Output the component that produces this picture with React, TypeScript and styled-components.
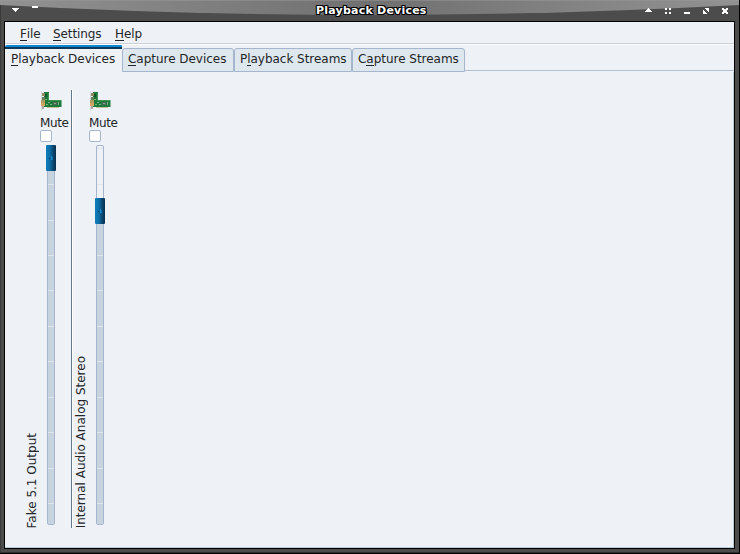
import React from "react";
import styled, { createGlobalStyle } from "styled-components";

const GlobalStyle = createGlobalStyle`
  * { box-sizing: border-box; }
  body { margin: 0; overflow: hidden; font-family: "DejaVu Sans", sans-serif; font-size: 12px; color: #232629; }
`;

const Window = styled.div`
  position: relative;
  width: 740px;
  height: 554px;
  display: flex;
  flex-direction: column;
  background: #4c4c4c;
  border-right: 1px solid #000;
  border-bottom: 1px solid #000;
  box-shadow: inset 1px 0 #3a3a3a, inset 0 -1px #303030;
`;

const TitleBar = styled.header`
  position: relative;
  height: 21px;
  flex: none;
`;

const TitleArt = styled.svg`
  position: absolute;
  left: 0;
  top: 0;
`;

const Title = styled.h1`
  position: absolute;
  left: 316px;
  top: 4px;
  margin: 0;
  font-size: 11px;
  line-height: 14px;
  font-weight: bold;
  letter-spacing: 0.22px;
  white-space: nowrap;
  color: #fff;
  text-shadow: -1px -1px #000, 1px -1px #000, -1px 1px #000, 1px 1px #000, 0 1px #000, 0 -1px #000, 1px 0 #000, -1px 0 #000;
`;

const Client = styled.main`
  width: 731px;
  height: 528px;
  margin-left: 4px;
  flex: none;
  display: flex;
  flex-direction: column;
  background: #eef1f6;
  border: 1px solid #000;
`;

const MenuBar = styled.nav`
  height: 23px;
  flex: none;
  display: flex;
  gap: 13px;
  padding: 4px 0 0 15px;
  line-height: 16px;
  border-bottom: 1px solid #fff;
  box-shadow: inset 0 -1px #c9d0d8;
`;

const Key = styled.span`
  border-bottom: 1px solid #232629;
  display: inline-block;
  height: 15px;
`;

const MenuItem = styled.span<{ $width: number }>`
  width: ${(p) => p.$width}px;
  white-space: nowrap;
  letter-spacing: -0.1px;
`;

const TabBar = styled.div`
  height: 27px;
  flex: none;
  display: flex;
  align-items: flex-start;
  background: linear-gradient(#b0bfd2, #b0bfd2) 0 25px / 100% 1px no-repeat;
`;

const Tab = styled.div<{ $width: number; $active?: boolean }>`
  width: ${(p) => p.$width}px;
  height: ${(p) => (p.$active ? 27 : 24)}px;
  margin-top: ${(p) => (p.$active ? 0 : 3)}px;
  padding: ${(p) => (p.$active ? "6px 0 0 6px" : "2px 0 0 5px")};
  line-height: 16px;
  letter-spacing: -0.03px;
  white-space: nowrap;
  background: ${(p) =>
    p.$active
      ? "linear-gradient(#0d87cd 0 2px, #0b3a5d 2px 4px, #eef1f6 4px)"
      : "#dfe7ee"};
  border: ${(p) => (p.$active ? "0" : "1px solid #a6b5ce")};
  border-radius: ${(p) => (p.$active ? "2px 1px 0 0" : "3px 3px 0 0")};
`;

const Pane = styled.section`
  flex: 1;
  display: flex;
  padding: 18px 0 0 21px;
  border-right: 1px solid #b9c9d6;
  border-bottom: 1px solid #b9c9d6;
`;

const Channel = styled.article`
  display: flex;
  width: 45px;
  height: 438px;
`;

const Divider = styled.div`
  width: 2px;
  height: 438px;
  margin-right: 2px;
  background: linear-gradient(90deg, #65788a 50%, #fff 50%);
`;

const NameColumn = styled.div`
  width: 14px;
  flex: none;
  display: flex;
  align-items: flex-end;
`;

const Name = styled.span`
  writing-mode: vertical-rl;
  transform: rotate(180deg);
  line-height: 14px;
  margin-left: -1px;
  white-space: nowrap;
`;

const Controls = styled.div`
  display: flex;
  flex-direction: column;
  width: 31px;
  flex: none;
`;

const CardIcon = styled.svg`
  display: block;
  width: 23px;
  height: 20px;
  flex: none;
  margin-top: 1px;
`;

const Mute = styled.label`
  display: flex;
  flex-direction: column;
  height: 34px;
  line-height: 16px;
  padding-top: 4px;
  letter-spacing: -0.35px;
`;

const CheckBox = styled.span`
  width: 12px;
  height: 12px;
  flex: none;
  margin-top: -1px;
  background: #fff;
  border: 1px solid #a6b5ce;
  border-radius: 2px;
`;

const Slider = styled.div`
  position: relative;
  width: 8px;
  height: 380px;
  margin: 0 0 3px 7px;
  border: 1px solid #a6b5ce;
  border-radius: 2px;
  background: #eef1f6;
`;

const Fill = styled.div<{ $top: number }>`
  position: absolute;
  inset: ${(p) => p.$top}px 0 0;
  background: #c8d3e0;
`;

const Tick = styled.div<{ $top: number }>`
  position: absolute;
  left: 0;
  right: 0;
  top: ${(p) => p.$top}px;
  height: 1px;
  background: #dfe6ed;
`;

const Thumb = styled.div<{ $top: number }>`
  position: absolute;
  left: -2px;
  top: ${(p) => p.$top}px;
  width: 10px;
  height: 26px;
  border-radius: 1px;
  background: linear-gradient(90deg, #0e7dbc, #0d70aa 35%, #0a3f66 80%, #092f4d);
  &::after {
    content: "";
    position: absolute;
    left: 5px;
    top: 11px;
    width: 2px;
    height: 4px;
    background: linear-gradient(90deg, #1689cc 50%, transparent 50%), linear-gradient(transparent 25%, #116fa9 25%);
  }
  &::before {
    content: "";
    position: absolute;
    left: 3px;
    top: 13px;
    width: 1px;
    height: 1px;
    background: #07345a;
  }
`;

const ticks = [2, 38, 74, 109, 144, 180, 215, 251, 286, 322, 357];

function SoundCard() {
  return (
    <CardIcon viewBox="0 0 23 20" aria-hidden="true">
      <path d="M1.5 0v20" stroke="#d3d8dd" />
      <path d="M3 1h6v8h12.5v7H4V1z" fill="#1c7a3a" />
      <path d="M8.5 2v7.5H21" fill="none" stroke="#3d9455" />
      <path d="M2 2h3v3H2z" fill="#8f8a62" />
      <path d="M2 6h3v3H2z" fill="#66805c" />
      <path d="M1 9h4v3H1z" fill="#b39a61" />
      <path d="M1 12h4v3H1z" fill="#d0a566" />
      <path d="M2 15h2v3H2z" fill="#aaa79e" />
      <path d="M5 3h2v3H5z" fill="#0a5427" />
      <path d="M13 11h4v3h-4z" fill="#4d6857" />
      <path d="M14 12h2v1h-2zM8 11h2v1H8zM10 13h2v1h-2zM18 11h1v3h-1z" fill="#87a78f" />
      <path d="M5 8h2v1H5zM6 13h2v1H6z" fill="#7bad6b" />
      <path d="M7 16.5h12" stroke="#bdb483" strokeOpacity=".8" />
    </CardIcon>
  );
}

function Mixer({ name, level }: { name: string; level: number }) {
  return (
    <Channel>
      <NameColumn><Name>{name}</Name></NameColumn>
      <Controls>
        <SoundCard />
        <Mute>Mute<CheckBox /></Mute>
        <Slider>
          <Fill $top={level + 13} />
          {ticks.map((t) => <Tick key={t} $top={t} />)}
          <Thumb $top={level} />
        </Slider>
      </Controls>
    </Channel>
  );
}

export default function App() {
  return (
    <>
      <GlobalStyle />
      <Window>
        <TitleBar>
          <TitleArt width="739" height="21" viewBox="0 0 739 21">
            <defs>
              <linearGradient id="gloss" x1="0" x2="1" y1="0" y2="0">
                <stop offset="0" stopColor="#929292" />
                <stop offset=".5" stopColor="#707070" />
                <stop offset="1" stopColor="#929292" />
              </linearGradient>
            </defs>
            <path d="M0 0h739v5Q370 25 0 5z" fill="url(#gloss)" />
            <path d="M0 .5h739" stroke="#9a9a9a" strokeOpacity=".5" />
            <g fill="#fff" shapeRendering="crispEdges">
              <path d="M12 8h7v1h-1v1h-1v1h-1v1h-1v-1h-1v-1h-1V9h-1z" />
              <path d="M32 6h6v2h-6z" />
              <path d="M645 12v-1h1v-1h1V9h1V8h1v1h1v1h1v1h1v1z" />
              <path d="M665 8h2v2h-2zM669 8h2v2h-2zM665 12h2v2h-2zM669 12h2v2h-2z" />
              <path d="M684 12h6v2h-6z" />
              <path d="M705 8h4v4h-1v-1h-1v-1h-1V9h-1zM703 10h1v1h1v1h1v1h1v1h-4z" />
              <path d="M722 8h2v1h2V8h2v2h-1v2h1v2h-2v-1h-2v1h-2v-2h1v-2h-1z" />
            </g>
          </TitleArt>
          <Title>Playback Devices</Title>
        </TitleBar>
        <Client>
          <MenuBar>
            <MenuItem $width={20}><Key>F</Key>ile</MenuItem>
            <MenuItem $width={49}><Key>S</Key>ettings</MenuItem>
            <MenuItem $width={30}><Key>H</Key>elp</MenuItem>
          </MenuBar>
          <TabBar>
            <Tab $width={117} $active><Key>P</Key>layback Devices</Tab>
            <Tab $width={112}><Key>C</Key>apture Devices</Tab>
            <Tab $width={118}>P<Key>l</Key>ayback Streams</Tab>
            <Tab $width={113}>C<Key>a</Key>pture Streams</Tab>
          </TabBar>
          <Pane>
            <Mixer name="Fake 5.1 Output" level={-1} />
            <Divider />
            <Mixer name="Internal Audio Analog Stereo" level={52} />
          </Pane>
        </Client>
      </Window>
    </>
  );
}
